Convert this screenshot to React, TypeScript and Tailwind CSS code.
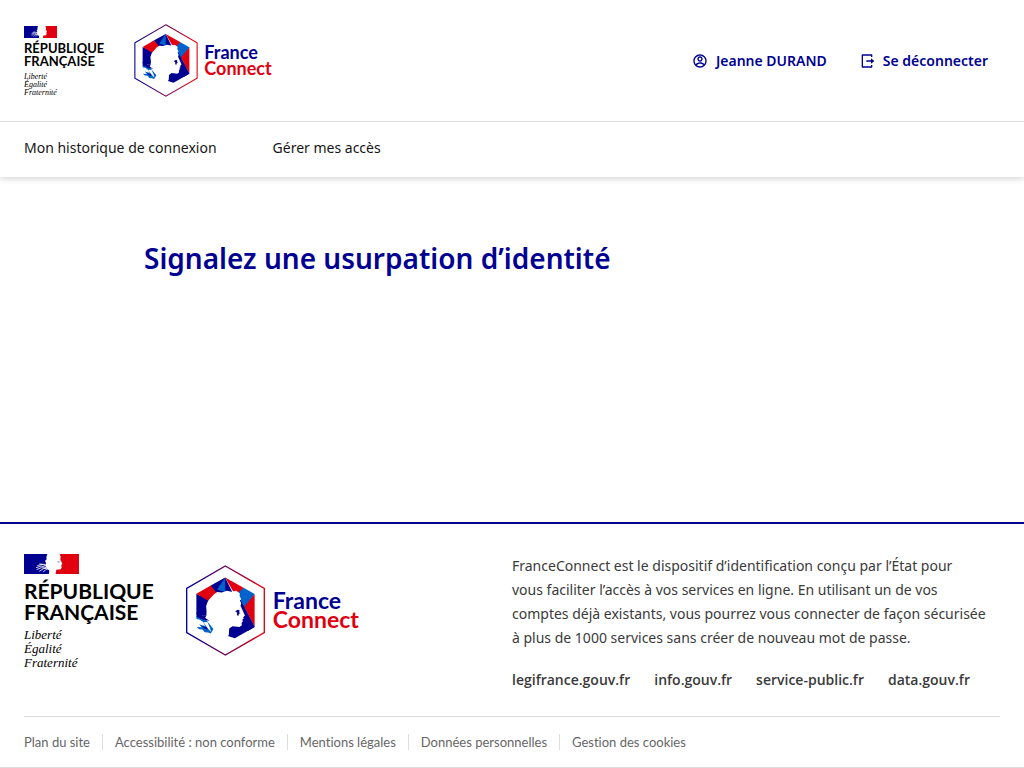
import React from 'react';
import { RiAccountCircleLine, RiLogoutBoxRLine } from 'react-icons/ri';

function Flag({ className }: { className: string }) {
  return (
    <svg viewBox="0 0 165 60" className={className} aria-hidden="true">
      <path fill="#000091" d="M0 0h76v60H0z" />
      <path fill="#e1000f" d="M94 0h71v60H94z" />
      <path fill="#fff" d="M70 0h37l3 8-1 9 6 12-3 4 1 8-3 5-13 1-3 13H74l4-10-8-4-5-9 1-10-3-6 5-5-1-6z" />
      <path
        fill="none"
        stroke="#fff"
        strokeWidth="2.5"
        d="M40 35l14-4 14 5M36 41l16-5 16 5M38 47l14-6 14 2M46 52l12-8 12-2M58 54l8-8 8-2M46 30l12 1 10 2"
      />
      <path fill="#8f8fc9" d="M100 22h6l1 3-5 1z" />
    </svg>
  );
}

function StateMark({ large = false }: { large?: boolean }) {
  return (
    <div className="text-black">
      <Flag className={large ? 'block h-5 w-[55px]' : 'block h-3 w-[33px]'} />
      <p
        className={
          large
            ? 'mt-1.5 font-["Lato",sans-serif] text-[21px] leading-[21px] font-bold'
            : 'mt-1 font-["Lato",sans-serif] text-[13px] leading-[13px] font-bold'
        }
      >
        RÉPUBLIQUE
        <br />
        FRANÇAISE
      </p>
      <p
        className={
          large
            ? 'mt-1.5 font-["Liberation_Serif",serif] text-[13px] leading-[14px] italic'
            : 'mt-[5px] font-["Liberation_Serif",serif] text-[8px] leading-[8px] italic'
        }
      >
        Liberté
        <br />
        Égalité
        <br />
        Fraternité
      </p>
    </div>
  );
}

function Hexagon({ id, className }: { id: string; className: string }) {
  return (
    <svg viewBox="0 3 236 272" className={className} aria-hidden="true">
      <defs>
        <linearGradient id={id} x1="0" x2="1" y1="0" y2="0">
          <stop offset="0.05" stopColor="#000091" />
          <stop offset="0.95" stopColor="#e1000f" />
        </linearGradient>
      </defs>
      <path d="M117.500 6L234 73v132l-116.500 67L2 205V73z" fill="none" stroke={`url(#${id})`} strokeWidth="4" />
      <path fill="#000091" d="M31 89l37 18-8 50-29-7z" />
      <path fill="#e1000f" d="M31 89l43-25 32 14v12l-40 20z" />
      <path fill="#000091" d="M74 64l43-24 24 50H94z" />
      <path fill="#0063cb" d="M117 40v44l-24-8z" />
      <path fill="#e1000f" d="M117 40l55 31-16 25-14-12z" />
      <path fill="#0063cb" d="M172 71l33 19-31 46-22-46z" />
      <path fill="#000091" d="M156 94l49 94-59 34-21-7 3-35 32-12z" />
      <path fill="#e1000f" d="M205 90v98l-31-60z" />
      <path fill="#000091" d="M174 128l31 60-20 12z" />
      <path
        fill="#fff"
        d="M63 156l-3-30 4-12 5-8 7-7 7-8 10-7 14 1 15-5 14 3 14-3 11 8-1 8 5 9-4 4 4 8-2 8 5 11 8 18-5 5 1 5-4 3 2 4-4 5 1 7-7 5-21-2-10 7-1 19-11 12H78l2-40z"
      />
      <path fill="#000091" d="M147 141l8-4 5 1-1 7 4 2-5 2-2 7-4-4 1-6z" />
      <path fill="#fff" d="M29 150l15 6 17-3 13 9 5 10-21-5-29-4z" />
      <path fill="#0063cb" d="M31 156l9 4 18 4 10 13 14 17-8 14-8-3-10-1-7-8-10-1-7-7 15 1-8-9 14 5-8-15-14-6z" />
      <path fill="#000091" d="M31 145l18 9 13-1-5 8 13 9-18-3-21-9zM44 183l17 7 10-7-6 13-11-4z" />
      <path fill="#fff" d="M52 174l13 19 10 10-4-14-7-16zM35 163l16 10 7 14-13-10z" />
    </svg>
  );
}

function FranceConnect({ large = false }: { large?: boolean }) {
  return (
    <div className={large ? 'flex items-center gap-2' : 'flex items-center gap-1.5'}>
      <Hexagon
        id={large ? 'hexagon-footer' : 'hexagon-header'}
        className={large ? 'h-[91px] w-[79px]' : 'h-[73px] w-16'}
      />
      <p
        className={
          large
            ? 'pb-0.5 font-["Lato",sans-serif] text-[23px] leading-[19px] font-bold'
            : 'pb-0.5 font-["Lato",sans-serif] text-lg leading-4 font-bold'
        }
      >
        <span className="text-[#000091]">France</span>
        <br />
        <span className="text-[#e1000f]">Connect</span>
      </p>
    </div>
  );
}

const partnerLinks = ['legifrance.gouv.fr', 'info.gouv.fr', 'service-public.fr', 'data.gouv.fr'];

const legalLinks = [
  'Plan du site',
  'Accessibilité : non conforme',
  'Mentions légales',
  'Données personnelles',
  'Gestion des cookies',
];

export default function App() {
  return (
    <div className='flex min-h-screen flex-col bg-white font-["Noto_Sans",sans-serif] text-[#161616]'>
      <header className="shadow-[0_2px_6px_rgba(0,0,18,0.16)]">
        <div className="flex items-center justify-between border-b border-[#ddd] px-6 py-6">
          <a href="#" className="flex items-start gap-[30px]" aria-label="FranceConnect">
            <div className="pt-0.5">
              <StateMark />
            </div>
            <FranceConnect />
          </a>
          <div className="flex gap-8 pr-3 text-sm leading-6 font-semibold text-[#000091]">
            <a href="#" className="flex items-center gap-2">
              <RiAccountCircleLine size={16} />
              Jeanne DURAND
            </a>
            <a href="#" className="flex items-center gap-2">
              <RiLogoutBoxRLine size={16} />
              Se déconnecter
            </a>
          </div>
        </div>
        <nav className="flex gap-14 px-6 pt-3.5 pb-[17px] text-sm leading-6">
          <a href="#">Mon historique de connexion</a>
          <a href="#">Gérer mes accès</a>
        </nav>
      </header>

      <main className="flex-1 px-36 py-[61px]">
        <h1 className="text-[28px] leading-10 font-semibold text-[#000091]">
          Signalez une usurpation d’identité
        </h1>
      </main>

      <footer className="border-t-2 border-b border-t-[#000091] border-b-[#ddd] px-6 pt-[30px]">
        <div className="grid grid-cols-2">
          <a href="#" className="flex items-start gap-8" aria-label="FranceConnect">
            <StateMark large />
            <div className="pt-[11px]">
              <FranceConnect large />
            </div>
          </a>
          <div className="text-sm leading-6 text-[#3a3a3a]">
            <p>
              FranceConnect est le dispositif d’identification conçu par l’État pour
              <br />
              vous faciliter l’accès à vos services en ligne. En utilisant un de vos
              <br />
              comptes déjà existants, vous pourrez vous connecter de façon sécurisée
              <br />à plus de 1000 services sans créer de nouveau mot de passe.
            </p>
            <ul className='mt-[18px] flex flex-wrap gap-x-6 font-["Open_Sans",sans-serif] font-semibold'>
              {partnerLinks.map((label) => (
                <li key={label}>
                  <a href="#">{label}</a>
                </li>
              ))}
            </ul>
          </div>
        </div>
        <ul className='mt-6 flex flex-wrap border-t border-[#ddd] py-[17px] font-["Lato",sans-serif] text-[13px] leading-4 text-[#666] [font-variant-ligatures:none]'>
          {legalLinks.map((label) => (
            <li
              key={label}
              className="mr-3 border-r border-[#ddd] pr-3 last:mr-0 last:border-r-0 last:pr-0"
            >
              <a href="#">{label}</a>
            </li>
          ))}
        </ul>
      </footer>
    </div>
  );
}
